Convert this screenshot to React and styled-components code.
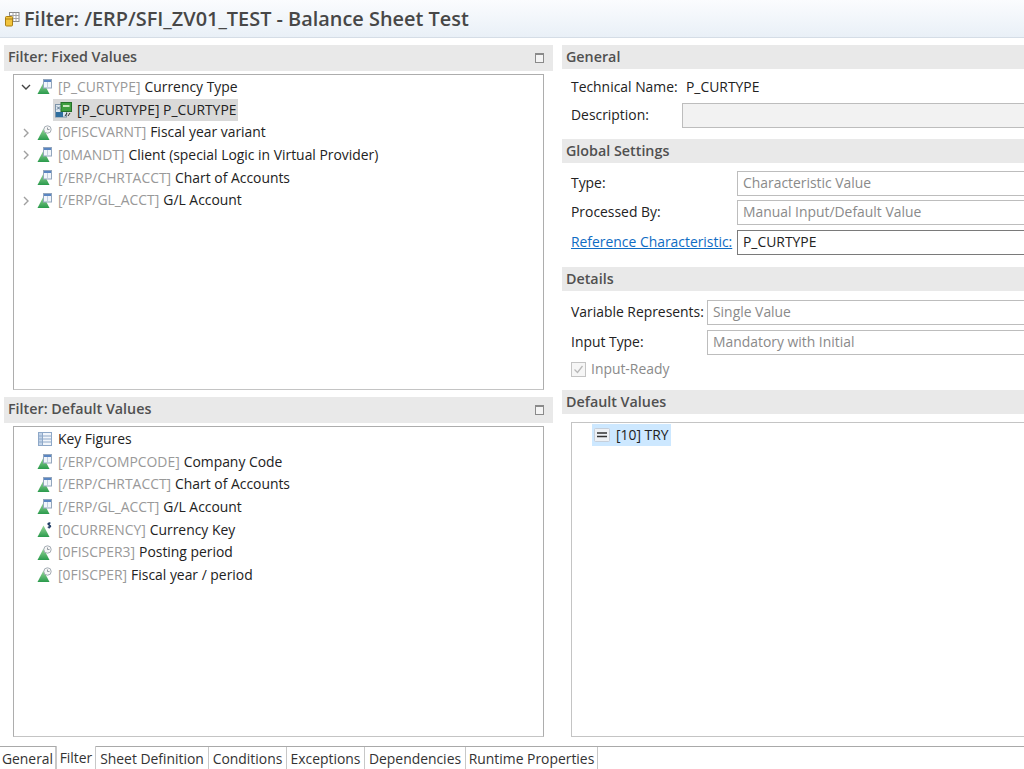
import React from "react";
import styled, { createGlobalStyle } from "styled-components";

const GlobalStyle = createGlobalStyle`
  html, body {
    margin: 0;
    padding: 0;
    background: #fff;
    overflow: hidden;
  }
  body {
    font-family: "Open Sans", "Noto Sans", sans-serif;
    font-size: 13.9px;
    color: #222;
  }
`;

const Page = styled.div`
  width: 1024px;
  height: 769px;
  display: flex;
  flex-direction: column;
  overflow: hidden;
`;

const TitleBar = styled.div`
  height: 38px;
  flex: none;
  display: flex;
  align-items: center;
  gap: 4px;
  padding: 0 0 0 5px;
  box-sizing: border-box;
  background: linear-gradient(#fbfcfe, #e9f0f7);
  border-bottom: 1px solid #d5dde6;
`;

const TitleText = styled.h1`
  margin: 0;
  font-size: 19.9px;
  font-weight: 600;
  color: #474747;
`;

const Main = styled.div`
  flex: 1;
  display: grid;
  grid-template-columns: 549px 1fr;
  column-gap: 9px;
  padding: 7px 0 9px 4px;
  min-height: 0;
`;

const LeftColumn = styled.div`
  display: flex;
  flex-direction: column;
  gap: 7px;
  min-height: 0;
`;

const RightColumn = styled.div`
  display: flex;
  flex-direction: column;
  min-width: 0;
`;

const Header = styled.div`
  height: ${(p) => (p.$tall ? 26 : 24)}px;
  flex: none;
  box-sizing: border-box;
  display: flex;
  align-items: center;
  justify-content: space-between;
  padding: ${(p) => (p.$tall ? "0 9px 1px 4px" : "1px 9px 0 4px")};
  background: #e9e9e9;
  font-size: 14.3px;
  font-weight: 600;
  color: #505050;
  line-height: 1;
`;

const Panel = styled.section`
  flex: ${(p) => p.$grow};
  display: flex;
  flex-direction: column;
  min-height: 0;
`;

const TreeBox = styled.div`
  flex: 1;
  margin: 3px 9px 0 9px;
  border: 1px solid #adadad;
  border-bottom-color: #c4c4c4;
  padding: 1px 0 0 7px;
`;

const Row = styled.div`
  height: 22.7px;
  display: flex;
  align-items: center;
  padding-left: ${(p) => (p.$child ? 32 : 0)}px;
  white-space: nowrap;
`;

const Twisty = styled.span`
  width: 16px;
  height: 16px;
  flex: none;
  display: flex;
  align-items: center;
`;

const RowIcon = styled.span`
  width: 16px;
  height: 16px;
  flex: none;
  margin-right: 5px;
  display: flex;
`;

/* Open Sans sits a pixel lower than the original UI font */
const RowText = styled.span`
  padding-bottom: 2px;
`;

const Selected = styled.span`
  display: flex;
  align-items: center;
  height: 22px;
  padding: 0 2px;
  background: ${(p) => p.$color};
  gap: ${(p) => p.$gap}px;
`;

const TechKey = styled.span`
  color: #999;
  margin-right: 4px;
`;

const MaximizeIcon = styled.span`
  width: 9px;
  height: 10px;
  box-sizing: border-box;
  border: 1px solid #8a8a8a;
  border-top-width: 2px;
  background: #f4f4f4;
`;

const Fields = styled.div`
  height: ${(p) => p.$height}px;
  flex: none;
  display: flex;
  flex-direction: column;
  padding: ${(p) => p.$top}px 0 0 9px;
  box-sizing: border-box;
`;

const FieldRow = styled.div`
  display: flex;
  align-items: center;
  height: ${(p) => p.$height || 28}px;
  flex: none;
`;

const FieldLabel = styled.span`
  width: ${(p) => p.$width}px;
  flex: none;
  padding-bottom: 2px;
  white-space: nowrap;
`;

const FieldLink = styled(FieldLabel)`
  color: #0f6cc4;
  text-decoration: underline;
`;

const Field = styled.div`
  flex: 1;
  height: 25px;
  box-sizing: border-box;
  display: flex;
  align-items: center;
  padding: 0 0 2px 5px;
  white-space: nowrap;
  border: 1px solid ${(p) => (p.$active ? "#7a7a7a" : "#bdbdbd")};
  border-right: none;
  background: ${(p) => (p.$empty ? "#f2f2f2" : "#fff")};
  color: ${(p) => (p.$active ? "#222" : "#8a8a8a")};
`;

const CheckRow = styled.div`
  display: flex;
  align-items: center;
  gap: 5px;
  height: 24px;
  color: #8a8a8a;
`;

const CheckBox = styled.span`
  width: 15px;
  height: 15px;
  box-sizing: border-box;
  border: 1px solid #c4c4c4;
  background: #f6f6f6;
  display: flex;
`;

const ValuesBox = styled.div`
  flex: 1;
  margin: 8px 0 0 9px;
  border: 1px solid #c4c4c4;
  border-right: none;
  padding: 1px 0 0 20px;
`;

const TabBar = styled.nav`
  height: 22px;
  flex: none;
  display: flex;
  border-top: 1px solid #a9a9a9;
  line-height: 24px;
`;

const Tab = styled.div`
  width: ${(p) => p.$width}px;
  box-sizing: border-box;
  flex: none;
  text-align: center;
  border-right: 1px solid #c8c8c8;
  white-space: nowrap;
  color: #333;
  background: #fff;
  ${(p) => p.$active && "margin-top: -1px; border-left: 1px solid #c8c8c8;"}
`;

const Chevron = ({ open }) => (
  <svg width="10" height="10" viewBox="0 0 10 10" fill="none" stroke={open ? "#444" : "#a0a0a0"} strokeWidth="1.4">
    <path d={open ? "M1 3l4 4 4-4" : "M3 1l4 4-4 4"} />
  </svg>
);

const Pyramid = ({ badge }) => (
  <svg width="16" height="16" viewBox="0 0 16 16">
    <defs>
      <linearGradient id="pyr" x1="0" y1="0" x2="0" y2="1">
        <stop offset="0" stopColor="#9ad89a" />
        <stop offset="1" stopColor="#2a9a4c" />
      </linearGradient>
    </defs>
    <path d="M6.5 3.5L12.5 15H0.5z" fill="url(#pyr)" />
    {badge === "table" && (
      <>
        <rect x="6.5" y="0.5" width="8" height="8.5" fill="#f1f5fa" stroke="#93a6bd" />
        <rect x="7" y="1" width="7" height="2" fill="#5a86c2" />
        <path d="M10.5 3v6" stroke="#c2cfdf" />
      </>
    )}
    {badge === "clock" && (
      <>
        <circle cx="10.5" cy="4.5" r="3.7" fill="#f6f6f6" stroke="#a5adb5" />
        <path d="M10.5 2.5v2h2" fill="none" stroke="#7f8790" strokeWidth="0.8" />
      </>
    )}
    {badge === "dollar" && (
      <path d="M13.5 1.2c-1-.6-2.6-.4-2.6.8s2.8 1 2.8 2.2-1.8 1.4-3 .7M12.2.2v6.4" fill="none" stroke="#17365f" strokeWidth="1.1" />
    )}
  </svg>
);

const VariableIcon = () => (
  <svg width="18" height="16" viewBox="0 0 18 16">
    <rect x="0.5" y="2.5" width="11" height="12.5" fill="#dbe6ef" stroke="#7c93a8" />
    <path d="M2 4.5l3 3m0-3l-3 3" stroke="#56708a" fill="none" />
    <rect x="1" y="10" width="7" height="5" fill="#2f6f9f" />
    <path d="M10 14l2-3M13 14l2-3" stroke="#333" />
    <rect x="6" y="0.5" width="10.5" height="9" fill="#3f9e3f" stroke="#25702a" />
    <rect x="8" y="3" width="6.5" height="2" fill="#c9e8c0" />
  </svg>
);

const KeyFiguresIcon = () => (
  <svg width="16" height="16" viewBox="0 0 16 16" fill="none">
    <rect x="1.5" y="1.5" width="13" height="13" fill="#f2f6fb" stroke="#8ea8c8" />
    <rect x="2" y="2" width="3.5" height="12" fill="#c3d5ea" />
    <path d="M1.5 5h13M1.5 8h13M1.5 11h13M5.5 1.5v13" stroke="#8ea8c8" />
  </svg>
);

const EqualsIcon = () => (
  <svg width="16" height="16" viewBox="0 0 16 16">
    <rect x="0.5" y="1.5" width="15" height="13" rx="1" fill="#eef1f5" stroke="#c5cfdb" />
    <path d="M3 6h10M3 9.5h10" stroke="#333" strokeWidth="1.6" />
  </svg>
);

const CheckMark = () => (
  <svg width="13" height="13" viewBox="0 0 13 13" fill="none" stroke="#b8b8b8" strokeWidth="1.3">
    <path d="M2.5 6.5l3 3 5-6.5" />
  </svg>
);

const TitleIcon = () => (
  <svg width="15" height="16" viewBox="0 0 15 16">
    <rect x="4.5" y="1.5" width="9.5" height="9" fill="#fff" stroke="#8a8a8a" />
    <path d="M4.5 4.5h9.5M4.5 7.5h9.5M8 1.5v9M11 1.5v9" stroke="#a5a5a5" />
    <rect x="0.5" y="5.5" width="7" height="9.5" rx="1" fill="#f2c43d" stroke="#a97f14" />
    <path d="M0.5 8h7" stroke="#a97f14" />
  </svg>
);

const fixedValues = [
  { id: "a", open: true, icon: "table", tech: "[P_CURTYPE]", name: "Currency Type" },
  { id: "b", child: true, tech: "[P_CURTYPE] P_CURTYPE" },
  { id: "c", twisty: true, icon: "clock", tech: "[0FISCVARNT]", name: "Fiscal year variant" },
  { id: "d", twisty: true, icon: "table", tech: "[0MANDT]", name: "Client (special Logic in Virtual Provider)" },
  { id: "e", icon: "table", tech: "[/ERP/CHRTACCT]", name: "Chart of Accounts" },
  { id: "f", twisty: true, icon: "table", tech: "[/ERP/GL_ACCT]", name: "G/L Account" },
];

const defaultValues = [
  { id: "g", icon: "keys", name: "Key Figures" },
  { id: "h", icon: "table", tech: "[/ERP/COMPCODE]", name: "Company Code" },
  { id: "i", icon: "table", tech: "[/ERP/CHRTACCT]", name: "Chart of Accounts" },
  { id: "j", icon: "table", tech: "[/ERP/GL_ACCT]", name: "G/L Account" },
  { id: "k", icon: "dollar", tech: "[0CURRENCY]", name: "Currency Key" },
  { id: "l", icon: "clock", tech: "[0FISCPER3]", name: "Posting period" },
  { id: "m", icon: "clock", tech: "[0FISCPER]", name: "Fiscal year / period" },
];

const tabs = [
  { label: "General", width: 56 },
  { label: "Filter", width: 40 },
  { label: "Sheet Definition", width: 113 },
  { label: "Conditions", width: 78 },
  { label: "Exceptions", width: 78 },
  { label: "Dependencies", width: 101 },
  { label: "Runtime Properties", width: 132 },
];

const TreeRow = ({ item }) => {
  if (item.child) {
    return (
      <Row $child>
        <Selected $color="#d9d9d9" $gap="4">
          <VariableIcon />
          <RowText>{item.tech}</RowText>
        </Selected>
      </Row>
    );
  }
  return (
    <Row>
      <Twisty>{(item.open || item.twisty) && <Chevron open={item.open} />}</Twisty>
      <RowIcon>{item.icon === "keys" ? <KeyFiguresIcon /> : <Pyramid badge={item.icon} />}</RowIcon>
      <RowText>
        {item.tech && <TechKey>{item.tech}</TechKey>}
        {item.name}
      </RowText>
    </Row>
  );
};

const App = () => (
  <Page>
    <GlobalStyle />
    <TitleBar>
      <TitleIcon />
      <TitleText>Filter: /ERP/SFI_ZV01_TEST - Balance Sheet Test</TitleText>
    </TitleBar>
    <Main>
      <LeftColumn>
        <Panel $grow="345">
          <Header $tall>
            Filter: Fixed Values
            <MaximizeIcon />
          </Header>
          <TreeBox>
            {fixedValues.map((item) => (
              <TreeRow key={item.id} item={item} />
            ))}
          </TreeBox>
        </Panel>
        <Panel $grow="340">
          <Header $tall>
            Filter: Default Values
            <MaximizeIcon />
          </Header>
          <TreeBox>
            {defaultValues.map((item) => (
              <TreeRow key={item.id} item={item} />
            ))}
          </TreeBox>
        </Panel>
      </LeftColumn>
      <RightColumn>
        <Header>General</Header>
        <Fields $height="70" $top="4">
          <FieldRow>
            <FieldLabel $width="115">Technical Name:</FieldLabel>
            <FieldLabel>P_CURTYPE</FieldLabel>
          </FieldRow>
          <FieldRow>
            <FieldLabel $width="111">Description:</FieldLabel>
            <Field $empty />
          </FieldRow>
        </Fields>
        <Header>Global Settings</Header>
        <Fields $height="104" $top="6">
          <FieldRow $height="29">
            <FieldLabel $width="166">Type:</FieldLabel>
            <Field>Characteristic Value</Field>
          </FieldRow>
          <FieldRow $height="29">
            <FieldLabel $width="166">Processed By:</FieldLabel>
            <Field>Manual Input/Default Value</Field>
          </FieldRow>
          <FieldRow $height="31">
            <FieldLink $width="166">Reference Characteristic:</FieldLink>
            <Field $active>P_CURTYPE</Field>
          </FieldRow>
        </Fields>
        <Header>Details</Header>
        <Fields $height="99" $top="6">
          <FieldRow $height="30">
            <FieldLabel $width="136">Variable Represents:</FieldLabel>
            <Field>Single Value</Field>
          </FieldRow>
          <FieldRow $height="30">
            <FieldLabel $width="136">Input Type:</FieldLabel>
            <Field>Mandatory with Initial</Field>
          </FieldRow>
          <CheckRow>
            <CheckBox>
              <CheckMark />
            </CheckBox>
            <RowText>Input-Ready</RowText>
          </CheckRow>
        </Fields>
        <Header>Default Values</Header>
        <ValuesBox>
          <Row>
            <Selected $color="#cde8ff" $gap="6">
              <EqualsIcon />
              <RowText>[10] TRY</RowText>
            </Selected>
          </Row>
        </ValuesBox>
      </RightColumn>
    </Main>
    <TabBar>
      {tabs.map((tab) => (
        <Tab key={tab.label} $width={tab.width} $active={tab.label === "Filter"}>
          {tab.label}
        </Tab>
      ))}
    </TabBar>
  </Page>
);

export default App;
